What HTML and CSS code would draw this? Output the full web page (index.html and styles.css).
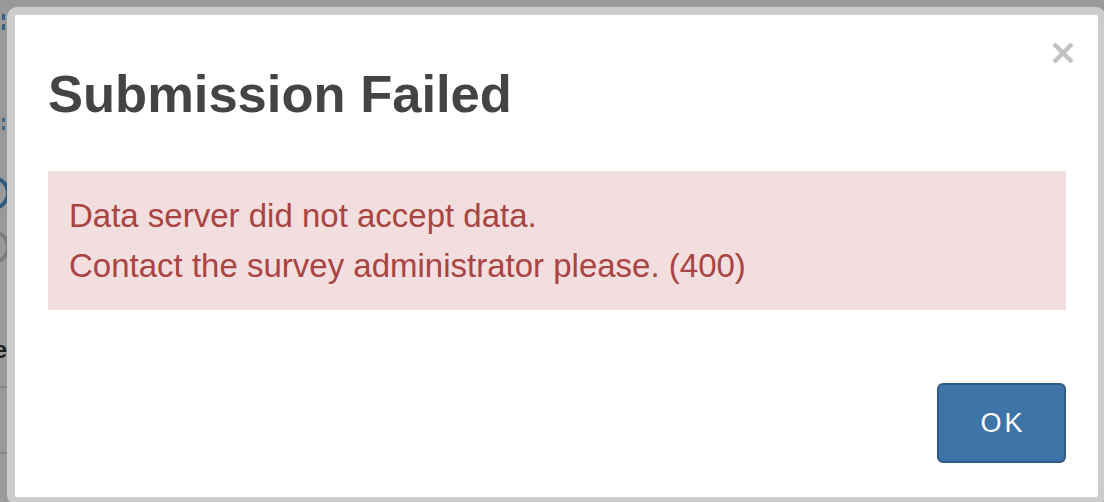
FILE: index.html
```html
<!DOCTYPE html>
<html lang="en">
<head>
    <meta charset="UTF-8">
    <meta name="viewport" content="width=device-width, initial-scale=1.0">
    <title>Submission Failed</title>
    <link rel="stylesheet" href="styles.css">
</head>
<body>
    <div class="page">
        <div class="page-mark mark-top"></div>
        <div class="page-mark mark-small"></div>
        <div class="radio radio-on"></div>
        <div class="radio"></div>
        <div class="page-label">Name</div>
        <div class="page-row"></div>
        <div class="page-row"></div>
    </div>

    <div class="modal">
        <div class="modal-header">
            <h2 class="modal-title">Submission Failed</h2>
            <button class="close" type="button" aria-label="Close">
                <svg width="22" height="22" viewBox="0 0 22 22">
                    <path d="M2 2 L20 20 M20 2 L2 20" stroke="#c2c2c2" stroke-width="4.4" fill="none"/>
                </svg>
            </button>
        </div>
        <div class="modal-body">
            <div class="alert">
                Data server did not accept data.<br>
                Contact the survey administrator please. (400)
            </div>
        </div>
        <div class="modal-footer">
            <button class="btn-ok" type="button">OK</button>
        </div>
    </div>
</body>
</html>
```

FILE: styles.css
```css
body {
    margin: 0;
    height: 100vh;
    overflow: hidden;
    background: #999999;
    font-family: "Liberation Sans", Arial, sans-serif;
}

/* page behind the backdrop, only its left edge shows */
.page {
    display: flex;
    flex-direction: column;
    margin-left: -24px;
    padding-top: 14px;
}
.page-mark {
    width: 26px;
    height: 16px;
    border-right: 3px dashed #2f5f8c;
}
.mark-small {
    margin-top: 88px;
    height: 12px;
    border-right: 3px dotted #3a6890;
}
.radio {
    width: 26px;
    height: 26px;
    border: 4px solid #7c7c7c;
    border-radius: 50%;
    margin-top: 20px;
}
.radio-on {
    margin-top: 46px;
    border-color: #2d5a80;
}
.page-label {
    margin-top: 72px;
    padding-left: 4px;
    font-weight: bold;
    font-size: 24px;
    color: #1c1c1c;
    text-align: right;
    width: 27px;
    overflow: hidden;
    direction: rtl;
}
.page-row {
    width: 40px;
    height: 64px;
    border-top: 2px solid #858585;
    margin-top: 22px;
}
.page-row + .page-row {
    margin-top: 0;
}

.modal {
    position: absolute;
    top: 7px;
    left: 7px;
    width: 1083px;
    border: 8px solid #cccccc;
    border-radius: 10px;
    background: #ffffff;
}
.modal-header {
    display: flex;
    justify-content: space-between;
    align-items: flex-start;
    padding: 27px 24px 0 33px;
}
.modal-title {
    margin: 22px 0 0 0;
    font-size: 52.5px;
    line-height: 60px;
    font-weight: bold;
    color: #444444;
}
.close {
    padding: 0;
    border: none;
    background: none;
    width: 22px;
    height: 22px;
    cursor: pointer;
}
.close svg {
    display: block;
}
.modal-body {
    padding: 47px 32px 0 33px;
}
.alert {
    padding: 20px 21px 19px 21px;
    background: #f2dede;
    color: #a94442;
    font-size: 33px;
    line-height: 50px;
}
.modal-footer {
    display: flex;
    justify-content: flex-end;
    padding: 73px 32px 34px 33px;
}
.btn-ok {
    width: 129px;
    height: 80px;
    border: 2px solid #2f5c87;
    border-radius: 6px;
    background: #3e74a7;
    color: #ffffff;
    font-family: "Liberation Sans", Arial, sans-serif;
    font-size: 27px;
    letter-spacing: 3px;
    padding: 0 0 0 3px;
    cursor: pointer;
}
```
